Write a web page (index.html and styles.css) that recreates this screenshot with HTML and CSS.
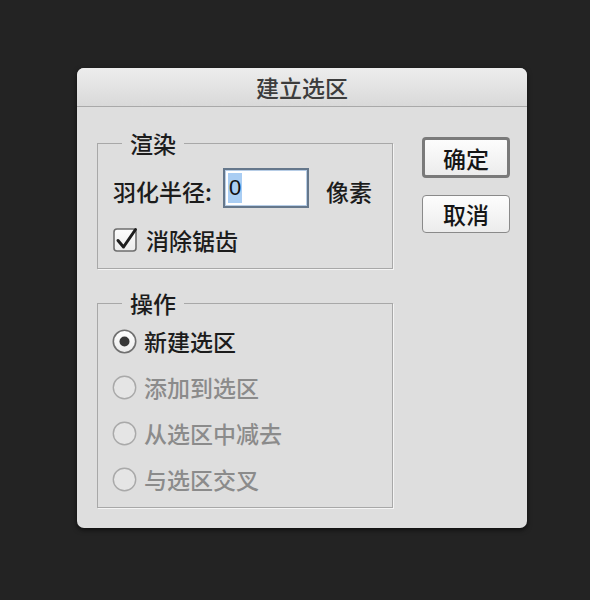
FILE: index.html
```html
<!DOCTYPE html>
<html lang="zh-CN">
<head>
<meta charset="utf-8">
<title>建立选区</title>
<link rel="stylesheet" href="styles.css">
</head>
<body>
<div class="dialog">
  <div class="titlebar">建立选区</div>
  <div class="content">
    <div class="left">
      <fieldset class="group">
        <legend>渲染</legend>
        <div class="row feather">
          <span class="label">羽化半径:</span>
          <span class="input"><span class="sel">0</span></span>
          <span class="unit">像素</span>
        </div>
        <div class="row check">
          <svg class="box" width="25" height="25" viewBox="0 0 25 25">
            <defs>
              <linearGradient id="cb" x1="0" y1="0" x2="0" y2="1">
                <stop offset="0" stop-color="#fdfdfd"/>
                <stop offset="1" stop-color="#ececec"/>
              </linearGradient>
            </defs>
            <rect x="1" y="2" width="22" height="22" rx="3" fill="url(#cb)" stroke="#6e6e6e" stroke-width="1.6"/>
            <path d="M5 13.5 L10.5 20 L22.5 2.5" fill="none" stroke="#1e1e1e" stroke-width="3" stroke-linecap="round" stroke-linejoin="round"/>
          </svg>
          <span>消除锯齿</span>
        </div>
      </fieldset>
      <fieldset class="group ops">
        <legend>操作</legend>
        <div class="row radio">
          <svg width="25" height="25" viewBox="0 0 25 25">
            <defs>
              <linearGradient id="rg" x1="0" y1="0" x2="0" y2="1">
                <stop offset="0" stop-color="#ffffff"/>
                <stop offset="1" stop-color="#ebebeb"/>
              </linearGradient>
            </defs>
            <circle cx="12.5" cy="12.5" r="11.2" fill="url(#rg)" stroke="#707070" stroke-width="1.6"/>
            <circle cx="12.5" cy="12.5" r="5" fill="#383838"/>
          </svg>
          <span>新建选区</span>
        </div>
        <div class="row radio disabled">
          <svg width="25" height="25" viewBox="0 0 25 25"><circle cx="12.5" cy="12.5" r="11.2" fill="#e5e5e5" stroke="#a9a9a9" stroke-width="1.4"/></svg>
          <span>添加到选区</span>
        </div>
        <div class="row radio disabled">
          <svg width="25" height="25" viewBox="0 0 25 25"><circle cx="12.5" cy="12.5" r="11.2" fill="#e5e5e5" stroke="#a9a9a9" stroke-width="1.4"/></svg>
          <span>从选区中减去</span>
        </div>
        <div class="row radio disabled">
          <svg width="25" height="25" viewBox="0 0 25 25"><circle cx="12.5" cy="12.5" r="11.2" fill="#e5e5e5" stroke="#a9a9a9" stroke-width="1.4"/></svg>
          <span>与选区交叉</span>
        </div>
      </fieldset>
    </div>
    <div class="buttons">
      <button class="btn default">确定</button>
      <button class="btn">取消</button>
    </div>
  </div>
</div>
</body>
</html>
```

FILE: styles.css
```css
html, body {
  margin: 0;
  padding: 0;
}
body {
  background: #232323;
  width: 590px;
  height: 600px;
  padding-top: 68px;
  box-sizing: border-box;
  font-family: "Noto Sans CJK SC", "Noto Sans", sans-serif;
  font-weight: 500;
  color: #1c1c1c;
}
.dialog {
  margin-left: 77px;
  width: 450px;
  background: #dedede;
  border-radius: 7px;
  overflow: hidden;
  box-shadow: 0 2px 5px rgba(0, 0, 0, 0.6);
}
.titlebar {
  height: 38px;
  line-height: 38px;
  text-align: center;
  font-size: 23px;
  color: #3c3c3c;
  background: linear-gradient(#ededed, #d9d9d9);
  border-bottom: 1px solid #a9a9a9;
}
.content {
  display: flex;
  padding: 0 17px 20px 20px;
}
.left {
  width: 296px;
}
.group {
  margin: 23px 0 0 0;
  padding: 12px 0 15px 15px;
  border: 1px solid #a8a8a8;
  box-shadow: 1px 1px 0 #f4f4f4;
  min-width: 0;
}
.group legend {
  margin-left: 9px;
  padding: 0 8px;
  font-size: 23px;
  line-height: 26px;
  height: 26px;
}
.group.ops {
  margin-top: 21px;
  padding: 12px 0 15px 15px;
  display: block;
}
.row {
  display: flex;
  align-items: center;
  font-size: 23px;
  line-height: 26px;
  height: 26px;
}
.feather {
  height: 40px;
}
.feather .label {
  margin-top: 6px;
  width: 110px;
}
.input {
  box-sizing: border-box;
  width: 86px;
  height: 40px;
  background: #fff;
  border: 2px solid #65778b;
  box-shadow: inset 0 0 0 1px #b7cde6;
  display: flex;
  align-items: center;
  padding-left: 3px;
}
.sel {
  display: inline-block;
  background: #a9cdf3;
  font-family: "Liberation Sans", sans-serif;
  font-weight: 400;
  font-size: 22px;
  line-height: 30px;
  height: 30px;
  padding: 0 1px;
  color: #111;
}
.unit {
  margin-left: 17px;
  margin-top: 6px;
}
.check {
  margin-top: 19px;
}
.check .box {
  margin-left: 0;
  margin-right: 8px;
  margin-top: -2px;
}
.radio {
  margin-bottom: 20px;
}
.radio:last-child {
  margin-bottom: 0;
}
.radio svg {
  margin-left: -1px;
  margin-right: 7px;
}
.radio.disabled {
  color: #8b8b8b;
}
.buttons {
  margin-left: auto;
  width: 88px;
  padding-top: 30px;
  display: flex;
  flex-direction: column;
  gap: 17px;
}
.btn {
  box-sizing: border-box;
  width: 88px;
  height: 38px;
  padding: 0;
  font-family: "Noto Sans CJK SC", "Noto Sans", sans-serif;
  font-weight: 500;
  font-size: 23px;
  color: #151515;
  background: linear-gradient(#fdfdfd, #ececec);
  border: 1.5px solid #8a8a8a;
  border-radius: 4px;
}
.btn.default {
  height: 41px;
  border: 3px solid #7a7a7a;
}
```
